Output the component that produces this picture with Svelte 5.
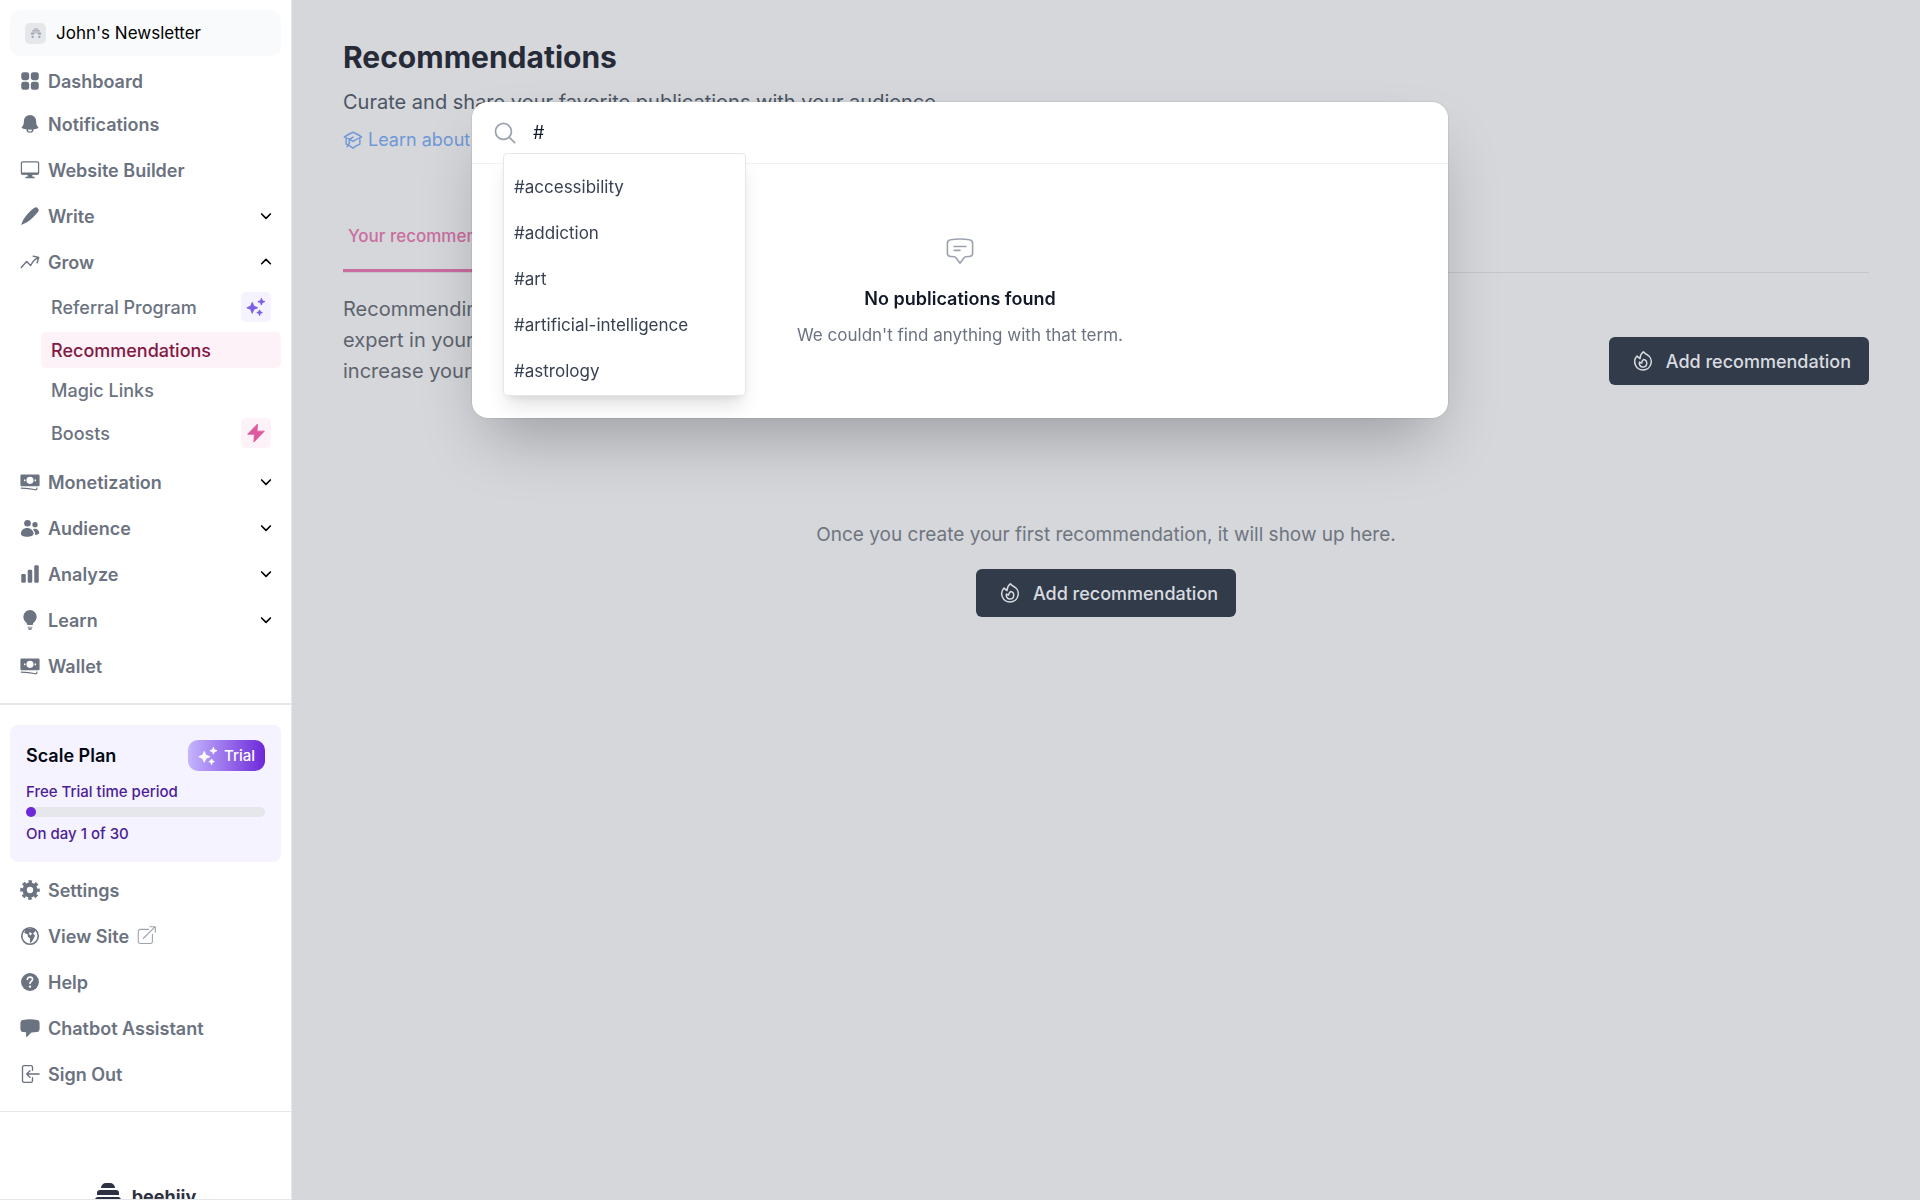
<script>
  let query = $state('#');

  const icons = {
    hive: '<path fill="currentColor" d="M9 3h6a2 2 0 0 1 2 2H7a2 2 0 0 1 2-2zM6 6.500h12a2 2 0 0 1 2 2v.5H4v-.5a2 2 0 0 1 2-2zM4 11h16a2.500 2.500 0 0 1 2.500 2.500V15h-6a5 5 0 0 0-9 0h-6v-1.500A2.500 2.500 0 0 1 4 11zM3 17.500h4V22H5.500A2.500 2.500 0 0 1 3 19.500zM17 17.500h4v2a2.500 2.500 0 0 1-2.500 2.500H17z"/>',
    dashboard:
      '<g fill="currentColor"><rect x="1.500" y="1.500" width="9.500" height="9.500" rx="2.800"/><rect x="13" y="1.500" width="9.500" height="9.500" rx="2.800"/><rect x="1.500" y="13" width="9.500" height="9.500" rx="2.800"/><rect x="13" y="13" width="9.500" height="9.500" rx="2.800"/></g>',
    bell: '<path fill="currentColor" fill-rule="evenodd" d="M4.600 8.600a7.400 7.400 0 0 1 14.800 0v1.600c0 2.200 1 4 2.500 5.600a.8.8 0 0 1-.4 1.200c-1.600.6-3.400 1-5.200 1.300a4.300 4.300 0 1 1-8.600 0c-1.800-.3-3.600-.7-5.200-1.300a.8.8 0 0 1-.4-1.200C3.600 14.200 4.600 12.400 4.600 10.200zM9.500 18.700a2.500 2.500 0 0 0 5 0 29 29 0 0 1-5 0z"/>',
    monitor:
      '<rect x="1.700" y="2.200" width="20.600" height="14.600" rx="1.500" fill="none" stroke="currentColor" stroke-width="1.500"/><path fill="currentColor" d="M1.700 15h20.600v2.500H1.700zM9.500 17h5l.6 3h2.400v2h-11v-2h2.400z"/>',
    pencil: '<path fill="currentColor" d="M17.200 2.200a3.300 3.300 0 0 1 4.600 4.600C18 11.800 12.500 17 7.800 19.900L1.200 22.800 4.100 16.200C7 11.500 12.200 6 17.200 2.200z"/>',
    trend:
      '<path fill="none" stroke="currentColor" stroke-width="1.700" stroke-linecap="round" stroke-linejoin="round" d="M1.500 18.500 8 11.500l4.700 4.700c2.200-4.400 5-7.700 9.300-9.500M15.800 5l6.700 1.600-2 6.400"/>',
    cash: '<path fill="currentColor" fill-rule="evenodd" d="M2 3h20a1.500 1.500 0 0 1 1.500 1.500v11A1.500 1.500 0 0 1 22 17H2a1.500 1.500 0 0 1-1.500-1.500v-11A1.500 1.500 0 0 1 2 3zM12 5.700a4.300 4.300 0 1 0 0 8.600 4.300 4.300 0 0 0 0-8.600zM4.700 9v2h1.800V9zM17.500 9v2h1.800V9z"/><path fill="none" stroke="currentColor" stroke-width="1.500" stroke-linecap="round" d="M1.500 19.200c7 0 11.500.7 16.800 2.100 1.200.3 2-.4 2-1.600v-.5"/>',
    people:
      '<g fill="currentColor"><circle cx="9" cy="6.300" r="4"/><circle cx="18" cy="8" r="3.200"/><path d="M1 18.500C1.500 14.500 4.700 12 8.500 12s7.500 2.500 7.900 6.500c0 2.300-3.500 4-7.900 4s-7.500-1.700-7.500-4zM15.500 13.500c3.500-1.500 7.500.5 7.700 4.700-1 1.300-3 2-5.200 2.100.3-2.700-.7-5.100-2.500-6.800z"/></g>',
    chart:
      '<g fill="currentColor"><rect x="1.500" y="12" width="5.400" height="10.500" rx="1.600"/><rect x="9.300" y="7" width="5.400" height="15.500" rx="1.600"/><rect x="17.100" y="1.500" width="5.400" height="21" rx="1.600"/></g>',
    bulb: '<path fill="currentColor" d="M12 0a8 8 0 0 1 8 8c0 3.200-1.700 5.300-3.600 7.200-.8.800-1 1.600-1.200 2.800H8.800c-.2-1.200-.4-2-1.200-2.800C5.700 13.300 4 11.200 4 8a8 8 0 0 1 8-8zM9 20h6v1H9zM9.500 22h5c-.3 1.200-1.200 2-2.500 2s-2.200-.8-2.500-2z"/>',
    gear: '<g fill="none" stroke="currentColor"><circle cx="12" cy="12" r="6.400" stroke-width="5.200"/><circle cx="12" cy="12" r="10" stroke-width="3.500" stroke-dasharray="4.200 3.654" stroke-dashoffset="2.100"/></g>',
    globe:
      '<circle cx="12" cy="12" r="9.900" fill="none" stroke="currentColor" stroke-width="1.900"/><path fill="currentColor" d="M7 3.200 17.500 3l1 3-2.800 3 2.300 2.600-2 4.400-3 4.500-1.200-1.200.4-4.300L9.500 13l-.4-3L5 8.400z"/><path fill="#fff" d="M11.600 7.200 14.500 9l-1.800 2.400-2-1.700z"/>',
    help: '<circle cx="12" cy="12" r="10.700" fill="currentColor"/><path fill="none" stroke="#fff" stroke-width="2" stroke-linecap="round" d="M8.900 9c0-4 6.200-3.600 6.200-.2 0 2.400-3.100 2.400-3.100 5"/><circle cx="12" cy="17.500" r="1.400" fill="#fff"/>',
    chat: '<path fill="currentColor" d="M3.500 2.300c5.500-.9 11.500-.9 17 0 1.800.3 3 1.800 3 3.600v7.300c0 1.800-1.200 3.300-3 3.600-2.200.3-4.500.5-6.800.6L8.500 22.500c-.5.5-1.200.1-1.200-.5v-4.800l-3.800-.4c-1.800-.3-3-1.800-3-3.600V5.900c0-1.800 1.200-3.300 3-3.600z"/>',
    exit: '<path fill="none" stroke="currentColor" stroke-width="1.600" stroke-linecap="round" stroke-linejoin="round" d="M15 7.500V4a2 2 0 0 0-2-2H5a2 2 0 0 0-2 2v16a2 2 0 0 0 2 2h8a2 2 0 0 0 2-2v-3.500M23 12H8.500M12 8l-4 4 4 4"/>',
    external:
      '<path fill="none" stroke="currentColor" stroke-width="1.300" stroke-linecap="round" stroke-linejoin="round" d="M14 4H4A2.500 2.500 0 0 0 1.500 6.500v12A2.500 2.500 0 0 0 4 21h12a2.500 2.500 0 0 0 2.500-2.500V10M7.500 15 21.500 1M15.500.8H22V7.300"/>',
    down: '<path fill="none" stroke="currentColor" stroke-width="2.800" stroke-linecap="round" stroke-linejoin="round" d="m4.500 8.500 7.500 7.500 7.500-7.500"/>',
    up: '<path fill="none" stroke="currentColor" stroke-width="2.800" stroke-linecap="round" stroke-linejoin="round" d="m4.500 15 7.500-7.500 7.500 7.500"/>',
    sparkles:
      '<path fill="currentColor" stroke="currentColor" stroke-width="1.200" stroke-linejoin="round" d="M7.500 6.500 9.400 11l4.600 1.900-4.600 1.900L7.500 19.500l-1.900-4.700L1 12.900 5.600 11zM18.500 1.500l1 3 3.200 1.100-3.200 1.100-1 3-1-3-3.200-1.100 3.200-1.100zM16.300 15.500l.9 2.300 2.400.9-2.400.9-.9 2.600-.9-2.600-2.400-.9 2.400-.9z"/>',
    bolt: '<path fill="currentColor" stroke="currentColor" stroke-width="1" stroke-linejoin="round" d="M13.800 1.200 2 13.500h8L9.500 22.800 22 9.800h-8.800z"/>',
    fire: '<g fill="none" stroke="currentColor" stroke-width="1.500" stroke-linecap="round" stroke-linejoin="round"><path d="M15.362 5.214A8.252 8.252 0 0 1 12 21 8.250 8.250 0 0 1 6.038 7.048 8.287 8.287 0 0 0 9 9.600a8.983 8.983 0 0 1 3.361-6.867 8.210 8.210 0 0 0 3 2.480z"/><path d="M12 18a3.750 3.750 0 0 0 .495-7.467 5.990 5.990 0 0 0-1.925 3.546 5.974 5.974 0 0 1-2.133-1A3.750 3.750 0 0 0 12 18z"/></g>',
    cap: '<path fill="none" stroke="currentColor" stroke-width="1.700" stroke-linecap="round" stroke-linejoin="round" d="M1.500 8.500C5 6 8.500 4 12 2.700c3.500 1.300 7 3.300 10.500 5.800-4 1.300-7.500 3-10.500 5.200-3-2.200-6.500-3.900-10.500-5.200zM4 9.500c-.4 2.500-.4 5-.2 7.500 3 1.200 5.700 2.700 8.200 4.700 2.500-2 5.200-3.500 8.200-4.700.2-2.500.2-5-.2-7.500M7.500 16v-4.500L12 8.500M7.500 14c0 3-1 4.500-2.500 6"/>',
    search:
      '<path fill="none" stroke="currentColor" stroke-width="1.900" stroke-linecap="round" d="m16.700 16.700 5.800 5.800M19 10.300a8.700 8.700 0 1 1-17.400 0 8.700 8.700 0 0 1 17.400 0z"/>',
    message:
      '<path fill="none" stroke="currentColor" stroke-width="1.400" stroke-linecap="round" stroke-linejoin="round" d="M7 9h10M7 12.300h5M4 3.200c5.300-.8 10.700-.8 16 0 1.600.2 2.800 1.500 2.800 3.100v8.200c0 1.700-1.200 3-2.900 3.100l-2.900.2c-.8.100-1.300.4-1.700 1.100L12 23.300l-3.300-4.400c-.4-.7-.9-1-1.700-1.100l-2.900-.2c-1.700-.1-2.900-1.400-2.900-3.100V6.300C1.200 4.700 2.400 3.400 4 3.200z"/>',
  };

  const mainNav = [
    { label: 'Dashboard', icon: 'dashboard' },
    { label: 'Notifications', icon: 'bell' },
    { label: 'Website Builder', icon: 'monitor' },
    { label: 'Write', icon: 'pencil', arrow: 'down' },
    {
      label: 'Grow',
      icon: 'trend',
      arrow: 'up',
      children: [
        { label: 'Referral Program', badge: 'sparkles' },
        { label: 'Recommendations', active: true },
        { label: 'Magic Links' },
        { label: 'Boosts', badge: 'bolt' },
      ],
    },
    { label: 'Monetization', icon: 'cash', arrow: 'down' },
    { label: 'Audience', icon: 'people', arrow: 'down' },
    { label: 'Analyze', icon: 'chart', arrow: 'down' },
    { label: 'Learn', icon: 'bulb', arrow: 'down' },
    { label: 'Wallet', icon: 'cash' },
  ];

  const footerNav = [
    { label: 'Settings', icon: 'gear' },
    { label: 'View Site', icon: 'globe', external: true },
    { label: 'Help', icon: 'help' },
    { label: 'Chatbot Assistant', icon: 'chat' },
    { label: 'Sign Out', icon: 'exit' },
  ];

  const tags = ['#accessibility', '#addiction', '#art', '#artificial-intelligence', '#astrology'];

  const trial = { day: 1, length: 30 };
</script>

{#snippet icon(name, size = 'md')}
  <svg class="icon {size}" viewBox="0 0 24 24" aria-hidden="true">{@html icons[name]}</svg>
{/snippet}

{#snippet row(item)}
  {#if item.arrow}
    <button class="nav-row" aria-expanded={item.arrow === 'up'}>
      {@render icon(item.icon)}
      {item.label}
      <span class="arrow">{@render icon(item.arrow, 'xs')}</span>
    </button>
  {:else}
    <a class="nav-row" href="#top">
      {@render icon(item.icon)}
      {item.label}
      {#if item.external}<span class="external">{@render icon('external')}</span>{/if}
    </a>
  {/if}
{/snippet}

<div class="app">
  <aside>
    <button class="workspace">
      <span class="avatar">{@render icon('hive', 'xs')}</span>
      John's Newsletter
    </button>

    <nav class="main-nav">
      {#each mainNav as item}
        {@render row(item)}
        {#if item.children}
          <div class="children">
            {#each item.children as child}
              <a href="#top" class:active={child.active} class:tall={child.badge}>
                {child.label}
                {#if child.badge}
                  <span class="badge {child.badge}">{@render icon(child.badge)}</span>
                {/if}
              </a>
            {/each}
          </div>
        {/if}
      {/each}
    </nav>

    <section class="plan">
      <div class="plan-head">
        <h2>Scale Plan</h2>
        <span class="pill">{@render icon('sparkles')} Trial</span>
      </div>
      <p id="trial-label">Free Trial time period</p>
      <div
        class="track"
        role="progressbar"
        aria-labelledby="trial-label"
        aria-valuenow={trial.day}
        aria-valuemax={trial.length}
      >
        <div class="fill" style="width: {(trial.day / trial.length) * 100}%"></div>
      </div>
      <p>On day {trial.day} of {trial.length}</p>
    </section>

    <nav class="footer-nav">
      {#each footerNav as item}
        {@render row(item)}
      {/each}
    </nav>

    <div class="brand">
      <svg viewBox="0 0 26 26" aria-hidden="true">
        <path fill="currentColor" d="M11 0h4a5 5 0 0 1 5 5H6a5 5 0 0 1 5-5zM5 7h16a3 3 0 0 1 3 3v2H2v-2a3 3 0 0 1 3-3zM3 14h20a3 3 0 0 1 3 3v2H0v-2a3 3 0 0 1 3-3zM2 21h6v5H5a3 3 0 0 1-3-3zM18 21h6v2a3 3 0 0 1-3 3h-3z" />
      </svg>
      beehiiv
    </div>
  </aside>

  <main id="top">
    <h1>Recommendations</h1>
    <p class="lead">Curate and share your favorite publications with your audience.</p>
    <a class="learn" href="#top">{@render icon('cap')} Learn about recommendations</a>

    <div class="tabs">
      <button class="tab">Your recommendations</button>
    </div>

    <div class="intro">
      <p>
        Recommending other publications helps establish you as a trusted<br />
        expert in your field, and it is one of the simplest ways to<br />
        increase your audience.
      </p>
      <button class="primary">{@render icon('fire', 'lg')} Add recommendation</button>
    </div>

    <div class="empty">
      <p>Once you create your first recommendation, it will show up here.</p>
      <button class="primary">{@render icon('fire', 'lg')} Add recommendation</button>
    </div>
  </main>
</div>

<div class="overlay">
  <div class="modal" role="dialog" aria-modal="true" aria-label="Search publications">
    <div class="search">
      {@render icon('search', 'search-icon')}
      <input type="text" aria-label="Search" bind:value={query} />
      <ul class="menu">
        {#each tags as tag}
          <li><button onclick={() => (query = tag)}>{tag}</button></li>
        {/each}
      </ul>
    </div>
    <div class="no-results">
      {@render icon('message', 'xl')}
      <h3>No publications found</h3>
      <p>We couldn't find anything with that term.</p>
    </div>
  </div>
</div>

<style>
  :global(body) {
    margin: 0;
    font-family: Inter, 'Liberation Sans', sans-serif;
    font-size: 18px;
    background: #d5d7db;
  }

  h1, h2, h3, p, ul {
    margin: 0;
    padding: 0;
  }

  button, input {
    font: inherit;
    border: none;
    background: none;
    padding: 0;
  }

  button { cursor: pointer; }

  a { text-decoration: none; }

  .icon {
    width: 20px;
    height: 20px;
    flex: none;
    display: block;
  }

  .icon.xs { width: 14px; height: 14px; }
  .icon.search-icon { width: 22px; height: 22px; }
  .icon.lg { width: 24px; height: 24px; }
  .icon.xl { width: 28px; height: 28px; }

  .app {
    display: flex;
    height: 100vh;
    overflow: hidden;
  }

  aside {
    width: 292px;
    flex: none;
    box-sizing: border-box;
    border-right: 1px solid #e5e7eb;
    border-bottom: 1px solid #e5e7eb;
    background: #fff;
    color: #6b7280;
    overflow: hidden;
  }

  .workspace {
    display: flex;
    align-items: center;
    gap: 10px;
    width: 271px;
    height: 46px;
    margin: 10px 10px 5px;
    padding: 0 15px;
    border-radius: 10px;
    background: #f9fafb;
    color: #000;
    font-size: 17px;
  }

  .avatar {
    display: grid;
    place-items: center;
    width: 21px;
    height: 21px;
    border-radius: 5px;
    background: #e5e7eb;
    color: #9ca3af;
  }

  .avatar .icon.xs { width: 12px; height: 12px; }

  .nav-row {
    display: flex;
    align-items: center;
    gap: 8px;
    width: 100%;
    height: 46px;
    box-sizing: border-box;
    padding: 0 18px 0 20px;
    color: #6b7280;
    font-weight: 600;
    text-align: left;
  }

  .main-nav {
    padding-bottom: 14px;
    border-bottom: 2px solid #e5e7eb;
  }

  .main-nav .nav-row:first-child { height: 40px; }

  .arrow {
    margin-left: auto;
    color: #000;
  }

  .external { color: #9ca3af; }

  .children {
    display: flex;
    flex-direction: column;
    gap: 4px;
    margin: 1px 10px 5px 41px;
  }

  .children a {
    display: flex;
    align-items: center;
    justify-content: space-between;
    height: 36px;
    padding: 0 10px;
    border-radius: 5px;
    color: #6b7280;
    font-weight: 500;
  }

  .children a.tall { height: 42px; }

  .children a.active {
    background: #fdf2f8;
    color: #831843;
  }

  .badge {
    display: grid;
    place-items: center;
    width: 30px;
    height: 30px;
    border-radius: 5px;
  }

  .badge.sparkles { background: #f5f3ff; color: #7c5fe6; }
  .badge.bolt { background: #fdf2f8; color: #db5a9b; }

  .plan {
    margin: 20px 10px 5px;
    padding: 15px 16px 17px;
    border-radius: 8px;
    background: #f5f3ff;
    color: #4c1d95;
    font-size: 15px;
    font-weight: 500;
    line-height: 22px;
  }

  .plan-head {
    display: flex;
    align-items: center;
    justify-content: space-between;
    margin-bottom: 10px;
  }

  .plan h2 {
    color: #030712;
    font-size: 18px;
    font-weight: 600;
  }

  .pill {
    display: flex;
    align-items: center;
    gap: 6px;
    height: 31px;
    padding: 0 10px;
    border-radius: 10px;
    background: linear-gradient(90deg, #c4b5fd, #6d28d9);
    color: #fff;
  }

  .track {
    height: 10px;
    margin: 4px 0 6px;
    border-radius: 5px;
    background: #e5e7eb;
  }

  .fill {
    height: 10px;
    min-width: 10px;
    border-radius: 5px;
    background: #6d28d9;
  }

  .footer-nav {
    padding-bottom: 14px;
    border-bottom: 1px solid #e5e7eb;
  }

  .brand {
    display: flex;
    justify-content: center;
    align-items: center;
    gap: 11px;
    margin-top: 71px;
    color: #2d3142;
    font-size: 18px;
    font-weight: 700;
  }

  .brand svg {
    width: 26px;
    height: 26px;
  }

  main {
    flex: 1;
    min-width: 0;
    padding: 37px 51px 0;
  }

  h1 {
    color: #272b38;
    font-size: 30px;
    font-weight: 700;
    line-height: 40px;
  }

  .lead {
    margin-top: 10px;
    color: #4b5563;
    font-size: 20px;
    line-height: 31px;
  }

  .learn {
    display: flex;
    align-items: center;
    gap: 5px;
    margin-top: 10px;
    color: #7098d6;
    font-size: 18px;
    line-height: 24px;
  }

  .tabs {
    margin-top: 49px;
    border-bottom: 1px solid #c3c6cb;
  }

  .tab {
    height: 71px;
    padding: 2px 5px 0;
    border-bottom: 3px solid #ca6d9f;
    color: #ca6d9f;
    font-size: 17px;
    font-weight: 500;
  }

  .intro {
    display: flex;
    align-items: flex-end;
    justify-content: space-between;
    margin-top: 21px;
    color: #5d636d;
    font-size: 20px;
    line-height: 31px;
  }

  .primary {
    display: flex;
    align-items: center;
    gap: 11px;
    height: 48px;
    padding: 0 18px 0 22px;
    border-radius: 6px;
    background: #323b49;
    color: #d9dbe0;
    font-size: 18px;
    font-weight: 500;
    white-space: nowrap;
  }

  .intro .primary { margin-bottom: 2px; }

  .empty {
    display: flex;
    flex-direction: column;
    align-items: center;
    gap: 19px;
    margin-top: 132px;
    color: #6f757f;
    font-size: 19px;
    line-height: 31px;
  }

  .overlay {
    position: fixed;
    inset: 0;
    display: flex;
    align-items: flex-start;
    justify-content: center;
    padding: 102px 30px 0;
  }

  .modal {
    width: 100%;
    max-width: 976px;
    border-radius: 16px;
    background: #fff;
    box-shadow: 0 0 0 1px rgba(0, 0, 0, 0.06), 0 32px 64px -15px rgba(0, 0, 0, 0.28);
  }

  .search {
    position: relative;
    display: flex;
    align-items: center;
    gap: 17px;
    height: 61px;
    padding: 0 22px;
    border-bottom: 1px solid #f0f1f3;
    color: #9ca3af;
  }

  .search input {
    flex: 1;
    color: #111827;
    outline: none;
  }

  .menu {
    position: absolute;
    top: 51px;
    left: 31px;
    width: 243px;
    box-sizing: border-box;
    padding: 10px 0 1px;
    border: 1px solid #e5e7eb;
    border-radius: 4px;
    background: #fff;
    box-shadow: 0 13px 19px -4px rgba(0, 0, 0, 0.12), 0 5px 8px -5px rgba(0, 0, 0, 0.1);
    list-style: none;
  }

  .menu button {
    width: 100%;
    height: 46px;
    padding: 0 10px;
    color: #374151;
    font-size: 17px;
    text-align: left;
    display: block;
  }

  .no-results {
    display: flex;
    flex-direction: column;
    align-items: center;
    padding: 72px 20px 70px;
    color: #6b7280;
    font-size: 17px;
    line-height: 26px;
  }

  .no-results .icon { color: #9ca3af; }

  .no-results h3 {
    margin: 22px 0 10px;
    color: #111827;
    font-size: 18px;
    font-weight: 600;
  }
</style>
